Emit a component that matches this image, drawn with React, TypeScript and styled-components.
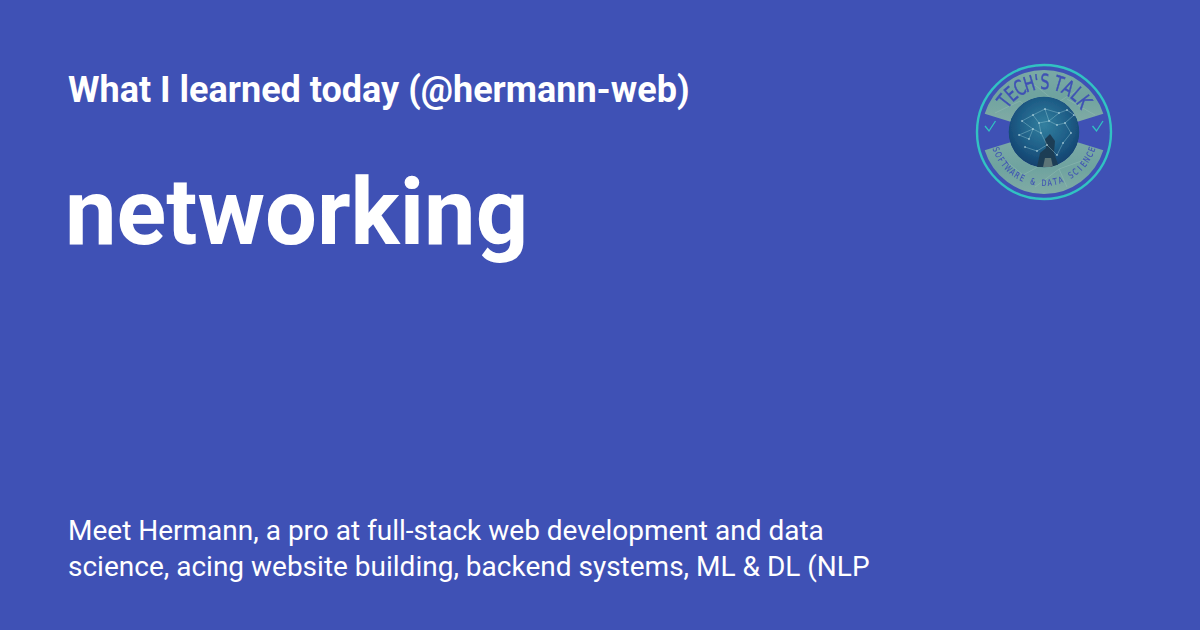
import React from 'react';
import styled, { createGlobalStyle } from 'styled-components';

const GlobalStyle = createGlobalStyle`
  html, body {
    margin: 0;
    padding: 0;
    background: #3f51b5;
  }
`;

const Card = styled.div`
  width: 1200px;
  height: 630px;
  box-sizing: border-box;
  padding: 64px 87px 45px 68px;
  background: #3f51b5;
  color: #fff;
  font-family: Roboto, sans-serif;
  display: flex;
  flex-direction: column;
  overflow: hidden;
`;

const Top = styled.div`
  display: flex;
  justify-content: space-between;
  align-items: flex-start;
  flex: 1;
`;

const Site = styled.div`
  font-size: 36px;
  font-weight: 700;
  line-height: 52px;
`;

const Title = styled.h1`
  margin: 42px 0 0 -3px;
  font-size: 92px;
  font-weight: 700;
  line-height: 110px;
`;

const Description = styled.p`
  margin: 0;
  width: 830px;
  font-size: 28px;
  line-height: 36px;
`;

const LogoSvg = styled.svg`
  display: block;
  width: 138px;
  height: 138px;
  margin-top: -1px;
  flex: none;
`;

const polar = (r: number, deg: number) => {
  const a = (deg * Math.PI) / 180;
  return `${69 + r * Math.cos(a)} ${69 + r * Math.sin(a)}`;
};

const sector = (from: number, to: number, inner: number, outer: number) =>
  `M${polar(outer, from)} A${outer} ${outer} 0 0 1 ${polar(outer, to)} L${polar(inner, to)} A${inner} ${inner} 0 0 0 ${polar(inner, from)} Z`;

const nodes: [number, number][] = [
  [47, 58], [58, 52], [64, 60], [74, 58], [84, 50], [92, 47], [99, 52], [66, 70],
  [58, 66], [44, 72], [82, 62], [90, 60], [72, 82], [62, 88], [82, 92], [50, 84],
  [70, 46], [96, 70], [54, 76], [88, 80],
];

const links: [number, number][] = [
  [0, 1], [1, 2], [2, 3], [3, 4], [4, 5], [5, 6], [2, 7], [7, 8], [8, 0], [8, 9],
  [3, 10], [10, 11], [6, 11], [7, 12], [12, 13], [12, 14], [13, 15], [16, 3], [16, 4],
  [11, 17], [9, 18], [18, 8], [14, 19], [17, 19], [1, 16],
];

// faint mesh that shows through the two bands of the badge
const bandLines = [
  'M20 50 L45 38 L60 52',
  'M60 22 L82 40 L104 26',
  'M92 36 L120 52',
  'M24 92 L48 112 L70 100',
  'M60 124 L84 106 L112 96',
  'M84 106 L92 124',
];

// letter and its angle on the badge, 0 is straight up
const topLetters: [string, number][] = [
  ['T', -52], ['E', -41], ['C', -29], ['H', -17], ["'", -8], ['S', 1],
  ['T', 17], ['A', 29], ['L', 41], ['K', 53],
];

const bottomText = 'SOFTWARE & DATA SCIENCE';
const bottomStep = 140 / (bottomText.length - 1);

const Logo = () => (
  <LogoSvg viewBox="0 0 138 138">
    <defs>
      <radialGradient id="globe" cx="50%" cy="40%" r="62%">
        <stop offset="0%" stopColor="#33809f" />
        <stop offset="55%" stopColor="#1f5f88" />
        <stop offset="100%" stopColor="#123f6c" />
      </radialGradient>
      <linearGradient id="band" x1="0" y1="0" x2="0" y2="1">
        <stop offset="0%" stopColor="#7aa9a5" />
        <stop offset="50%" stopColor="#6fa39f" />
        <stop offset="100%" stopColor="#80aba5" />
      </linearGradient>
      <clipPath id="globeClip">
        <circle cx="69" cy="69" r="35.5" />
      </clipPath>
      <clipPath id="bandClip">
        <path d={sector(197, 343, 35, 62)} />
        <path d={sector(17, 163, 35, 62)} />
      </clipPath>
      <filter id="soft" x="-5%" y="-5%" width="110%" height="110%">
        <feGaussianBlur stdDeviation="0.4" />
      </filter>
    </defs>
    <g filter="url(#soft)">
      <circle cx="69" cy="69" r="67" fill="none" stroke="#30c2c2" strokeWidth="2.4" />
      <path d={sector(197, 343, 35, 62)} fill="url(#band)" />
      <path d={sector(17, 163, 35, 62)} fill="url(#band)" />
      <g clipPath="url(#bandClip)" fill="none" stroke="#9cc4bb" strokeWidth="0.7" opacity="0.55">
        {bandLines.map(d => (
          <path key={d} d={d} />
        ))}
      </g>
      <g clipPath="url(#globeClip)">
        <circle cx="69" cy="69" r="35.500" fill="url(#globe)" />
        <path d="M62 104 L65 90 L71 85 L70 76 L75 71 L80 78 L79 90 L84 104 Z" fill="#1f3e55" />
        <path d="M68 104 L70 95 L76 95 L78 104 Z" fill="#5d7478" />
        {links.map(([a, b]) => (
          <line
            key={`${a}-${b}`}
            x1={nodes[a][0]}
            y1={nodes[a][1]}
            x2={nodes[b][0]}
            y2={nodes[b][1]}
            stroke="#a9dbe2"
            strokeWidth="0.6"
            opacity="0.6"
          />
        ))}
        {nodes.map(([x, y]) => (
          <circle key={`${x}-${y}`} cx={x} cy={y} r="0.8" fill="#cfeaf0" />
        ))}
      </g>
      <g fontFamily="'DejaVu Sans', sans-serif" fill="#3f51b5" stroke="#3f51b5" textAnchor="middle">
        {topLetters.map(([ch, deg], i) => (
          <text
            key={i}
            fontSize="21"
            strokeWidth="0.5"
            transform={`rotate(${deg} 69 69) translate(69 26) scale(0.68 1)`}
          >
            {ch}
          </text>
        ))}
        {bottomText.split('').map((ch, i) => (
          <text
            key={i}
            fontSize="9"
            strokeWidth="0.1"
            transform={`rotate(${70 - i * bottomStep} 69 69) translate(69 123) scale(0.72 1)`}
          >
            {ch}
          </text>
        ))}
      </g>
      <path d="M10 63 L14 68 L20.500 58" fill="none" stroke="#30c2c2" strokeWidth="1.300" />
      <path d="M117.500 63 L121.500 68 L128 58" fill="none" stroke="#30c2c2" strokeWidth="1.300" />
    </g>
  </LogoSvg>
);

export default function App() {
  return (
    <>
      <GlobalStyle />
      <Card>
        <Top>
          <div>
            <Site>What I learned today (@hermann-web)</Site>
            <Title>networking</Title>
          </div>
          <Logo />
        </Top>
        <Description>
          Meet Hermann, a pro at full-stack web development and data science, acing website building, backend systems, ML &amp; DL (NLP
        </Description>
      </Card>
    </>
  );
}
